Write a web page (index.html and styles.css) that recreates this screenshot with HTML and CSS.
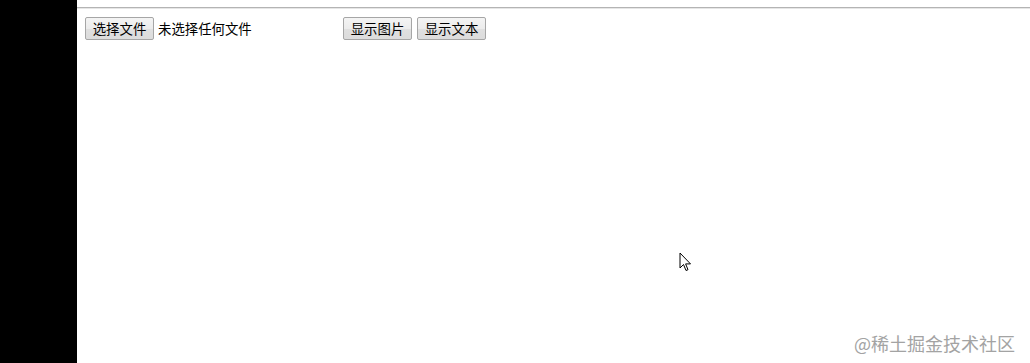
FILE: index.html
```html
<!DOCTYPE html>
<html lang="zh-CN">
<head>
<meta charset="utf-8">
<title>Demo</title>
<link rel="stylesheet" href="styles.css">
</head>
<body>
<div class="page">
  <div class="side"></div>
  <div class="main">
    <div class="rule"></div>
    <div class="toolbar">
      <div class="file">
        <button class="btn">选择文件</button>
        <span class="file-name">未选择任何文件</span>
      </div>
      <button class="btn">显示图片</button>
      <button class="btn">显示文本</button>
    </div>
  </div>
</div>
<svg class="cursor" width="14" height="22" viewBox="0 0 14 22">
  <path d="M1 1 L1 16 L4.5 12.5 L7 18.5 L9 17.7 L6.6 11.9 L11.5 11.9 Z" fill="#fff" stroke="#000" stroke-width="1" stroke-linejoin="miter"/>
</svg>
<div class="watermark">@稀土掘金技术社区</div>
</body>
</html>
```

FILE: styles.css
```css
html, body {
  margin: 0;
  padding: 0;
  background: #fff;
}
body {
  width: 1030px;
  height: 363px;
  overflow: hidden;
  position: relative;
  font-family: "Noto Sans CJK SC", "Liberation Sans", sans-serif;
}
.page {
  display: flex;
  height: 363px;
}
.side {
  width: 77px;
  background: #000;
  flex: none;
}
.main {
  flex: 1;
  padding-top: 7px;
}
.rule {
  height: 1px;
  background: #b4b4b4;
  border-bottom: 1px solid #e6e6e6;
}
.toolbar {
  display: flex;
  align-items: center;
  padding: 8px 0 0 8px;
  gap: 5px;
}
.file {
  width: 253px;
  display: flex;
  align-items: center;
  gap: 4px;
}
.btn {
  box-sizing: border-box;
  height: 23px;
  width: 69px;
  padding: 0;
  margin: 0;
  font-family: "Noto Sans CJK SC", sans-serif;
  font-size: 13.4px;
  line-height: 21px;
  color: #000;
  border: 1px solid #a6a6a6;
  border-radius: 2px;
  background: linear-gradient(#f4f4f4, #ececec 50%, #e0e0e0 51%, #dcdcdc);
}
.file-name {
  font-size: 13.4px;
  color: #000;
  line-height: 23px;
}
.cursor {
  position: absolute;
  left: 679px;
  top: 252px;
}
.watermark {
  position: absolute;
  right: 15px;
  bottom: 8px;
  font-size: 18px;
  line-height: 24px;
  color: #a3a3a3;
  letter-spacing: 0;
}
```
